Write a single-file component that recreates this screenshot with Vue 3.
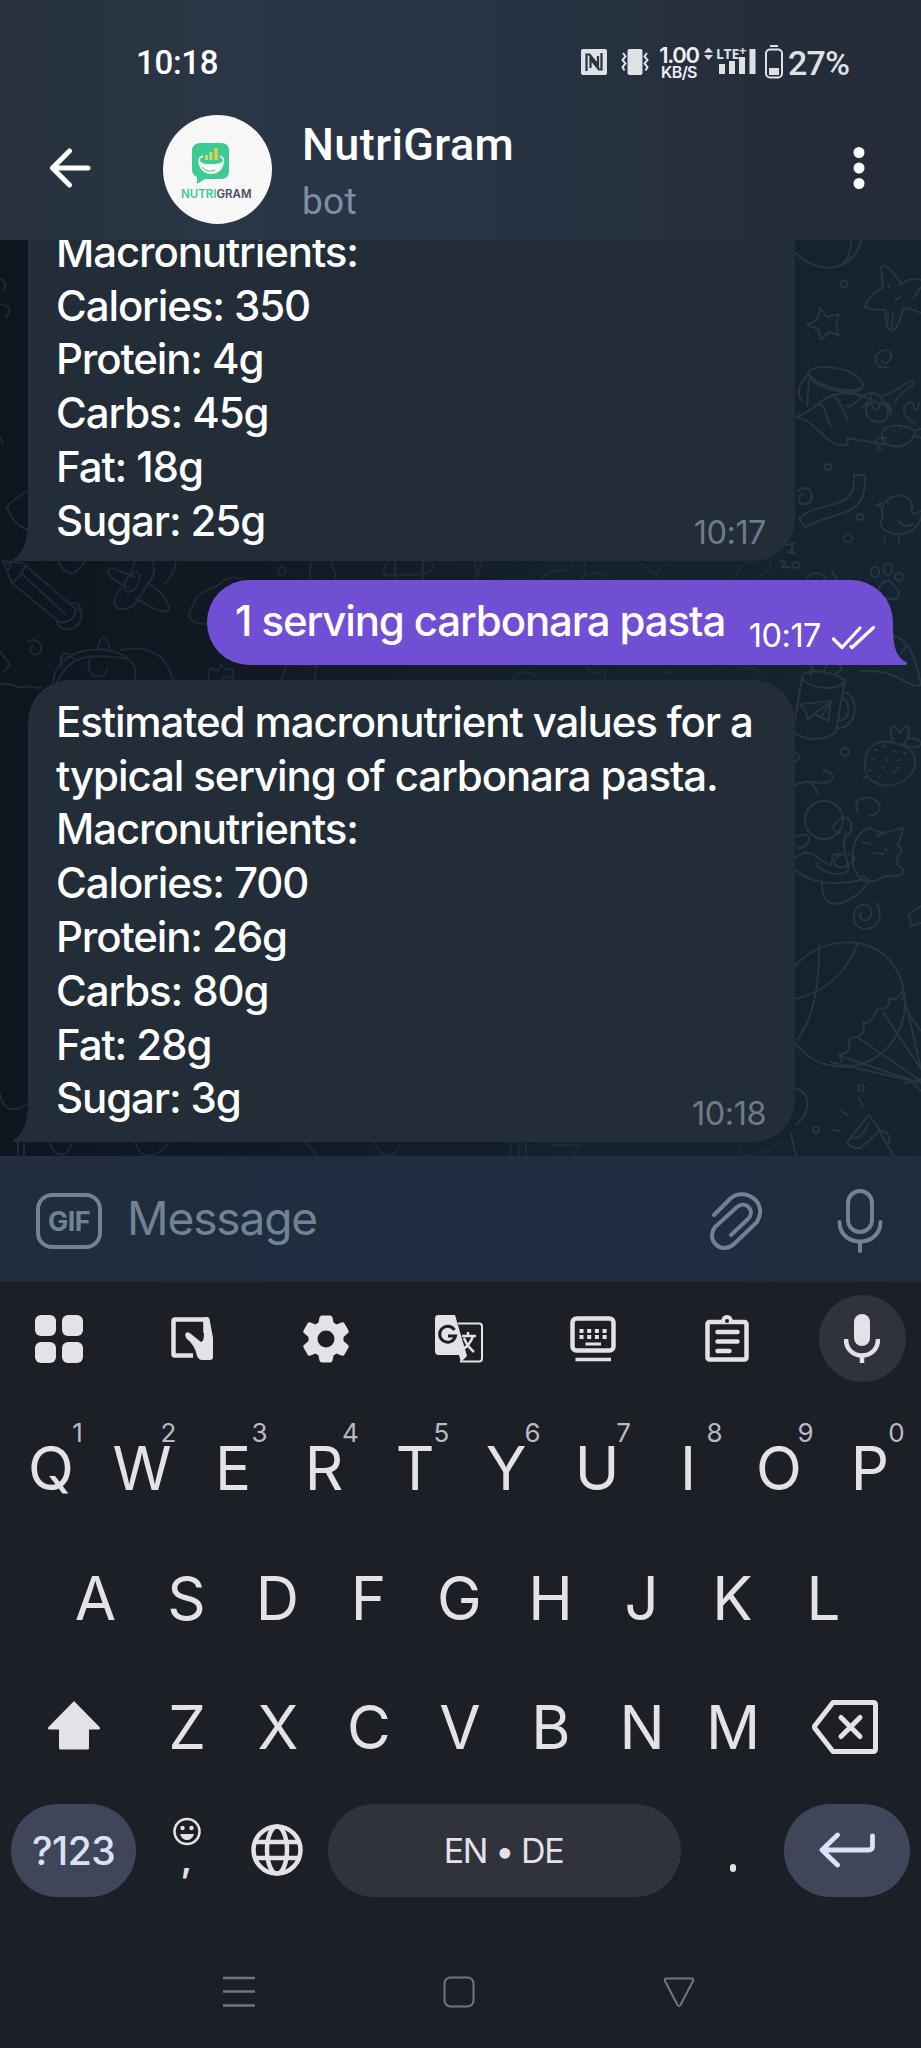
<script setup>
const first = ['Macronutrients:', 'Calories: 350', 'Protein: 4g', 'Carbs: 45g', 'Fat: 18g', 'Sugar: 25g']
const second = [
  'Estimated macronutrient values for a',
  'typical serving of carbonara pasta.',
  'Macronutrients:',
  'Calories: 700',
  'Protein: 26g',
  'Carbs: 80g',
  'Fat: 28g',
  'Sugar: 3g',
]
const row1 = [...'QWERTYUIOP'].map((k, i) => ({ k, n: (i + 1) % 10 }))
const row2 = [...'ASDFGHJKL']
const row3 = [...'ZXCVBNM']
</script>

<template>
  <div class="phone">
    <header class="top">
      <div class="status">
        <span class="clock">10:18</span>
        <div class="tray">
          <svg class="nfc" width="26" height="26" viewBox="0 0 26 26">
            <rect width="26" height="26" rx="2" fill="#dfe1e5" />
            <path d="M5.500 22V5.500H8.500L17 16V7 M20.500 4V20.500H18L9.500 10V19" fill="none" stroke="#283343" stroke-width="2.200" />
          </svg>
          <svg class="vib" width="28" height="26" viewBox="0 0 28 26">
            <rect x="6.500" width="15" height="26" rx="2" fill="#dfe1e5" />
            <path d="M2 4l2.500 3.500L1.500 11l3 3.500L1.500 18l2 3.500M26 4l-2.500 3.500 3 3.500-3 3.500 3 3.500-2 3.500" fill="none" stroke="#dfe1e5" stroke-width="2" />
          </svg>
          <div class="speed"><b>1.00</b><i>KB/S</i></div>
          <div class="signal">
            <svg width="52" height="28" viewBox="0 0 52 28">
              <g fill="#dfe1e5">
                <path d="M0 5.500L4.500 .5 9 5.500zM0 8L4.500 13 9 8z" />
                <rect x="15" y="17" width="6" height="10" />
                <rect x="25" y="14" width="6" height="13" />
                <rect x="35" y="10" width="6" height="17" />
                <rect x="45.500" y="2" width="6" height="25" />
              </g>
            </svg>
            <span class="lte">LTE<sup>+</sup></span>
          </div>
          <svg class="batt" width="18" height="34" viewBox="0 0 18 34">
            <path d="M5 1h8" stroke="#dfe1e5" stroke-width="2" />
            <rect x="1" y="4.500" width="16" height="28" rx="4" fill="none" stroke="#dfe1e5" stroke-width="2" />
            <rect x="4" y="23" width="10" height="7" fill="#dfe1e5" />
          </svg>
          <span class="pct">27%</span>
        </div>
      </div>
      <div class="bar">
        <svg class="back" width="42" height="42" viewBox="0 0 42 42">
          <path d="M39 21H4M20.500 4L3.500 21l17 17" fill="none" stroke="#fff" stroke-width="5" stroke-linecap="round" stroke-linejoin="round" />
        </svg>
        <div class="avatar">
          <svg width="38" height="41" viewBox="0 0 38 41">
            <path d="M9 0H29Q37 0 37 8V28Q37 36 29 36H13L5 41V34Q0 32 0 27V8Q0 0 9 0Z" fill="#3fca93" />
            <path d="M6 18C7 26 12 31 19 31s12-4 13-12c-3 3-7 3-12 3S10 22 6 18z" fill="#f4fbf7" />
            <path d="M11 13c-7 3-5 9 8 9s16-5 9-9" fill="none" stroke="#f4fbf7" stroke-width="1.500" />
            <path d="M10 24c3 4 8 5 13 3" fill="none" stroke="#3fca93" stroke-width="1" />
            <path d="M14.500 17v-5M18.800 17V9" stroke="#c8df65" stroke-width="3" />
            <path d="M24 17V5" stroke="#e9c941" stroke-width="3.500" />
          </svg>
          <div class="brand"><span>NUTRI</span>GRAM</div>
        </div>
        <div class="who">
          <div class="name">NutriGram</div>
          <div class="kind">bot</div>
        </div>
        <svg class="more" width="12" height="44" viewBox="0 0 12 44">
          <g fill="#fff"><circle cx="6" cy="6.500" r="5.500" /><circle cx="6" cy="22" r="5.500" /><circle cx="6" cy="37.500" r="5.500" /></g>
        </svg>
      </div>
    </header>

    <main class="chat">
      <svg class="paper" width="921" height="916" viewBox="0 240 921 916">
        <g fill="none" stroke="#263541" stroke-width="2" stroke-linecap="round" stroke-linejoin="round">
          <path d="M796 253c22 23 58 19 65-13M851 240q0 18-9 24" />
          <circle cx="844" cy="284" r="3.500" />
          <path d="M881 267c3-4 8 0 21 17 6-6 14-5 19-4M881 267c1 8 1 14 2 20-7 5-16 11-18 20 7 4 14 2 20 3 0 9 1 18 6 21 8-3 10-14 12-23 7 0 13 3 18 5M914 298l7-11M889 285v3M900 282v3M895 299q4 1 5-3M888 312l-1 15M893 313l-1 15" />
          <path d="M820 308l7 9 12-3-3 12 3 9-10-3-8 8-3-11-11-4 10-5zM888 367c-12 3-16-10-9-15s17 1 10 9c-4 5-8 1-6-2" />
          <path d="M808 373c4-12 53-5 55 12 1 10-47 5-55-12zM810 378c9 12 42 18 52 11M808 375c-10 9-12 20-6 25M809 380l-2 26M795 417c15-3 24-17 38-22 17-4 34 0 48 10M795 417c23 2 28 30 50 28 4-1 3-5 2-7M815 405c14-3 9 14 17 22M833 395q12 13 14 25M847 438l54 9M846 406c8 3 13-11 24-13M863 407q9-9 9-14M873 393c11 3 15 14 18 22M881 396c15-2 23-15 32-15 6 5-14 8-18 22M883 402q9 1 8 10" />
          <path d="M885 421c-20 5-24-15-13-19 0 12 7 10 8 0 7 4 11 8 5 19zM883 430c11-8 30-4 32 3-7 21-39 16-32-3zM886 438c-16-2-9 8-4 12M914 431l7-2M914 435l7 3M915 424c-21-14-7-25-1-21-1 10 4 9 5 0M878 448v3M894 430v1M901 428v1" />
          <circle cx="828" cy="467" r="3" /><circle cx="860" cy="517" r="3" /><circle cx="848" cy="538" r="4" />
          <path d="M798 491c10-10 20 8 9 13-11 2-10-10-3-10M854 475h11c3 44-27 34-60 52l-6-9c25-20 58-5 55-43z" />
          <path d="M883 518c-8-25 32-31 29-8-2 7 8 2 10 0 1 20-22 31-37 20-7-6-5-10-2-12zM882 503l-6 2 6 2M885 536l-1 6M899 535v7M898 521c5 6 11 6 15 3M888 502v1" />
          <ellipse cx="875" cy="572" rx="4" ry="5" /><ellipse cx="888" cy="569" rx="4" ry="6" /><ellipse cx="899" cy="577" rx="4" ry="4" />
          <path d="M878 590c4-10 12-12 16-4 8 5 5 15-3 13-5-2-15 2-13-9M787 545l7-2-3 7 4 4-8-2M780 561l6 1-4 5 8 0M806 582c3-13 18-11 21 0M832 570l5 12" /><circle cx="796" cy="565" r="3" />
          <path d="M890 635c21 2 27 30 31 50-13 5-22-17-61-14M907 645l-9 13" />
          <path d="M802 678l-9 53c11 12 38 9 43 0l9-52c-2 15-42 9-43-2 0-12 48-3 43 8M843 692c20 4 12 38-5 36M843 698c10 8 5 24-4 22M802 704l29-3-3 20-14-7-6 6-3-11-5-3zM814 714l17-13-10 16M810 675q5-5 0-9M825 674c-5-5 6-8 1-13M835 674q11-5 4-10" />
          <circle cx="845" cy="752" r="4" /><path d="M795 753a4 4 0 0 1 0 8" />
          <path d="M865 768c-1-26 15-31 39-22 15 6 15 27-1 35-16 9-36 4-38-13zM893 742c-5-17 0-20 7-9 7-13 12-5 7 5M904 744c6-13 22-1 15 2-7 3-11 1-15-2" /><path d="M875 750h2m6-3 2-1m9 5 2 1m8 1h2m-34 7 2-1m11-1 2 3m11-1h2m-31 10 2 1m12-4 2 1m12 0h2m-35 10 2-1m13 0 2-1m12-4 3-1m-22 11 2-1" />
          <path d="M795 786c8-8 26-1 33-4 10-3 3-12-5-11M812 783l6 11" /><circle cx="824" cy="820" r="19" />
          <path d="M796 836c22-6 12 14 1 12M795 858c17-13 19 1 35 7 6-4-4-13 13-11-13 3-10 18 3 12 8-3 13-11 3-12M840 833q-15-4 2-15M842 818c10-3 13 13 5 18M846 832c-7 19 5 31 2 38-7 10-36-1-30-8M858 812c-9-17 18-19 22-6 0 6-5 10-10 9M870 828c12 8 20 3 33 0-1 8-3 13-6 18 6 0 6 7 1 9l-1 9 7 6c-3 8-13 6-19 6-25 16-35-7-32-24q2-20 17-24M862 842l8 2M877 836l8-3M874 853l10 1M886 848v3M796 870c17 16 46 15 64 10M822 882c-2 34 30 23 46 1q2-5-6-7" />
          <path d="M877 903c13 28-24 35-23 13 0-15 20-15 17-1-3 10-15 4-10-2M921 906l-12 8 2 12 10-3" />
          <path d="M795 966c34-38 104-33 110 33 2 42-34 76-77 66q-20-5-33-22M819 945q1 65-22 95M858 943q-18 46-63 56M902 1000q4-5 0-9c-3 8-9 10-13 7 2 10-5 12-12 10-4 17-13 16-14 14 5 17-11 14-14 18 2 17-8 13-10 15l3 6M904 995l17 74M905 1008l16 23M883 1012l38 57M857 1037l64 44M840 1056l81 27M830 1062l91 21M905 1083l16-4M913 1083l8 8" />
          <circle cx="861" cy="1088" r="3" /><circle cx="816" cy="1130" r="3" /><path d="M859 1098l4 9M841 1110l6 5M833 1130l6 1M847 1142l22-27 11 15-19 18q-11 1-14-6zM851 1136c4 6 14-2 17-12M879 1131q12 0 10 12M880 1132l14 24M796 1088c16 6 14 25 1 36M791 1134l5 22" />
        </g>
        <g fill="none" stroke="#1e2933" stroke-width="2" stroke-linecap="round" stroke-linejoin="round">
          <path d="M3 561l20 2M3 561l9 22M25 565L71 605 80 611M12 583L58 621M20 572L65 614M25 565q-2 10-13 18M3 561l8 3-2 5M71 603c12-2 15 17 4 24-9 6-18 0-18-6M75 609c2 7-6 15-16 13" />
          <path d="M58 562c9 15 16 13 19 8 4-3 7-7 8-9M128 587C100 575 107 565 115 569L135 577M148 583c23 15 26 32 14 28-9-1-19-9-27-13M153 562q4 11-4 20C141 593 137 611 120 609c-10-3-5-14 0-20 7-10 11-17 15-27" />
          <ellipse cx="132" cy="582" rx="6" ry="11" transform="rotate(30 132 582)" /><path d="M176 562q-2 13-11 21M206 624c-27-1-15-16-8-28 8-7 15-5 25-15 7-5 12-4 18-2" />
          <path d="M28 642c7-7 19 5 10 12-8 2-11-6-5-8M0 651l10 14-6 6M0 684c14-2 15 5 24 3 7-2 10 1 17 1M53 682c2-20 18-32 46-33 35 4 38 18 36 32M62 668c-4-15 4-19 12-9M97 650c4-17 9-19 13 0M57 682c13-25 26-30 72-23M92 656c-6 6-4 21 6 20 6 1 8-2 9-6M121 650c28-6 47 5 52 32M208 680l2-12 8 3 3-6 6 5 6-1v9M223 679q2-5 8-1" />
          <circle cx="282" cy="571" r="4" /><path d="M312 562q-6 20 5 38M331 563q10 20 0 38M388 562c-8 12-5 15 7 13s25 3 35-4q6-5 1-9M395 579v-17M423 579v-17M475 562l2 17 5-17M542 579c11-17 27 0 29-15 12-18 20 8 10 15 19-13 31 0 23 0M640 563l14 12 14-13M650 570l10 9M735 579q3-14 15-17M770 562q5 6-15 17" />
          <path d="M281 680l6-16 30 2-3 14M514 680c5-11 18-9 22-3M586 667l8 7 12-4-2 10M663 674q6-5 10 2M718 671c9-15 20-8 24-2 15-5 15 4 22 10" />
          <path d="M0 279a7 7 0 0 1 4 11M0 304q15 2 6 13M3 443l-3-5M28 490Q0 510 8 508M8 508q3 15 20 22M0 1094q4 24 28 10M18 1142v14M24 1144v12M50 1142c4 17 18 16 21 3M135 1142c7 21 22 16 34 0M305 1142l12 14M375 1142c3 17 20 18 24 4M510 1156c0-25 10-20 9 0M526 1142v14M553 1145h27l-7 11M738 1147c8 16 16 5 21 6 15-1 15-13 29-11" />
        </g>
      </svg>

      <section class="bubble in one">
        <p v-for="t in first" :key="t">{{ t }}</p>
        <time>10:17</time>
        <svg class="tail left" width="24" height="42" viewBox="0 0 24 42"><path d="M16 0C16 22 12 34 0 41Q1 42 4 42H24V0z" fill="#222d38" /></svg>
      </section>
      <section class="bubble out">
        <p>1 serving carbonara pasta</p>
        <time>10:17</time>
        <svg class="ticks" width="46" height="25" viewBox="0 0 46 25"><path d="M2.500 14l8.500 8.500L29 3M20 21.500l1 1L42.500 2.500" fill="none" stroke="#fff" stroke-width="3.200" stroke-linecap="round" stroke-linejoin="round" /></svg>
        <svg class="tail right" width="24" height="42" viewBox="0 0 24 42"><path d="M10 0C10 22 12 33 23 39Q26 41 22 42H0V0z" fill="#714fd5" /></svg>
      </section>
      <section class="bubble in two">
        <p v-for="t in second" :key="t">{{ t }}</p>
        <time>10:18</time>
        <svg class="tail left" width="24" height="42" viewBox="0 0 24 42"><path d="M16 0C16 22 12 34 0 41Q1 42 4 42H24V0z" fill="#222d38" /></svg>
      </section>
    </main>

    <div class="compose">
      <div class="gif">GIF</div>
      <span class="hint">Message</span>
      <svg class="clip" width="54" height="60" viewBox="0 0 54 60">
        <path d="M4 24L20 8C34-5 59 11 47 31L24 53C12 64-5 50 5 36L27 16C36 9 46 20 38 28L21 44" fill="none" stroke="#708294" stroke-width="4" stroke-linecap="round" />
      </svg>
      <svg class="mic" width="46" height="66" viewBox="0 0 46 66">
        <g fill="none" stroke="#708294" stroke-width="4" stroke-linecap="round"><rect x="11" y="3" width="24" height="41" rx="12" /><path d="M2.500 34c0 26 41 26 41 0M23 54v9" /></g>
      </svg>
    </div>

    <div class="keyboard">
      <div class="tools">
        <div><svg width="48" height="48" viewBox="0 0 48 48"><g fill="#e3e2e8"><rect width="21" height="21" rx="6" /><rect x="27" width="21" height="21" rx="6" /><rect y="27" width="21" height="21" rx="6" /><rect x="27" y="27" width="21" height="21" rx="6" /></g></svg></div>
        <div><svg width="42" height="43" viewBox="0 0 42 43"><path d="M22 38.500H3.500Q2.500 38.500 2.500 37V4Q2.500 2.500 4 2.500H34.500V16" fill="none" stroke="#e3e2e8" stroke-width="4.500" /><path d="M33 0h3q2 0 2.500 2L42 21v19q0 3-3 3H31q-3 0-5-4-2-11-10-17-3-4-1-6 2-2 5 1l10 8q3-1 3-8z" fill="#e3e2e8" /></svg></div>
        <div><svg width="48" height="48" viewBox="0 0 48 48"><path fill="#e3e2e8" fill-rule="evenodd" d="M20 .5h8q2 0 2.500 2l1 5 3 2 5-2q2-1 3 1l4 7q1 2-1 3l-4 3.500v4l4 3.500q2 1 1 3l-4 7q-1 2-3 1l-5-2-3 2-1 5q-.5 2-2.500 2h-8q-2 0-2.500-2l-1-5-3-2-5 2q-2 1-3-1l-4-7q-1-2 1-3l4-3.500v-4l-4-3.500q-2-1-1-3l4-7q1-2 3-1l5 2 3-2 1-5q.5-2 2.500-2zM24 15.500a8.500 8.500 0 1 0 0 17 8.500 8.500 0 0 0 0-17z" /></svg></div>
        <div><svg width="48" height="48" viewBox="0 0 48 48"><path d="M23 8.500h21q3 0 3 3v32q0 3-3 3H25" fill="none" stroke="#e3e2e8" stroke-width="2" /><path d="M3 0h17l12 41-6 6-2-7H4q-4 0-4-4V4q0-4 3-4z" fill="#e3e2e8" /><path d="M19.500 15a8 8 0 1 0 1 6H13" fill="none" stroke="#1d1f27" stroke-width="3" /><path d="M27 21h14M33 17v4M38 21q-3 9-11 14M29 23q3 8 10 14" fill="none" stroke="#e3e2e8" stroke-width="2.400" /></svg></div>
        <div><svg width="46" height="46" viewBox="0 0 46 46"><rect x="2.500" y="2.500" width="41" height="32" rx="4" fill="none" stroke="#e3e2e8" stroke-width="4.500" /><path d="M5.500 43.500h35.500" stroke="#e3e2e8" stroke-width="3.500" /><path d="M9.500 15h28M9.500 21h28" stroke="#e3e2e8" stroke-width="4" stroke-dasharray="4 3.700" /><path d="M15.500 28H31" stroke="#e3e2e8" stroke-width="3" /></svg></div>
        <div><svg width="44" height="48" viewBox="0 0 44 48"><rect x="2.500" y="7" width="39" height="37.500" rx="2" fill="none" stroke="#e3e2e8" stroke-width="4.500" /><path d="M16 6q1-6 6-6t6 6v3H16z" fill="#e3e2e8" /><circle cx="22" cy="6" r="2" fill="#1d1f27" /><path d="M12.500 17h20M12.500 26.500h20M12.500 36h12" stroke="#e3e2e8" stroke-width="4.500" stroke-linecap="round" /></svg></div>
        <div><span class="round"><svg width="36" height="50" viewBox="0 0 36 50"><rect x="10" y="0" width="16" height="32" rx="8" fill="#e3e2e8" /><path d="M2 25c0 22 32 22 32 0M18 41v8" fill="none" stroke="#e3e2e8" stroke-width="4.500" /></svg></span></div>
      </div>
      <div class="row r1"><div v-for="c in row1" :key="c.k" class="key">{{ c.k }}<small>{{ c.n }}</small></div></div>
      <div class="row r2"><div v-for="c in row2" :key="c" class="key">{{ c }}</div></div>
      <div class="row r3">
        <div class="side"><svg width="54" height="50" viewBox="0 0 54 50"><path d="M27 1L52.500 27q1.500 2-1 2.500H42V48q0 1.500-1.500 1.500h-27Q12 49.500 12 48V29.500H2.500Q0 29 1.500 27z" fill="#e3e2e8" /></svg></div>
        <div v-for="c in row3" :key="c" class="key">{{ c }}</div>
        <div class="side del"><svg width="66" height="54" viewBox="0 0 66 54"><path d="M21 2.500H61Q63.500 2.500 63.500 5V49Q63.500 51.500 61 51.500H21L3 28.500Q2 27 3 25.500z" fill="none" stroke="#e3e2e8" stroke-width="5" stroke-linejoin="round" /><path d="M29 17.500l19 19M48 17.500l-19 19" stroke="#e3e2e8" stroke-width="5" stroke-linecap="round" /></svg></div>
      </div>
      <div class="row r4">
        <div class="pill sym">?123</div>
        <div class="emoji">
          <svg width="28" height="29" viewBox="0 0 28 29"><circle cx="14" cy="14.500" r="12.500" fill="none" stroke="#e3e2e8" stroke-width="2.600" /><circle cx="9.500" cy="11" r="2.200" fill="#e3e2e8" /><circle cx="18.500" cy="11" r="2.200" fill="#e3e2e8" /><path d="M7 17h14q-2 6-7 6t-7-6z" fill="#e3e2e8" /></svg>
          <span>,</span>
        </div>
        <div class="globe"><svg width="52" height="52" viewBox="0 0 52 52"><g fill="none" stroke="#e3e2e8" stroke-width="4.500"><circle cx="26" cy="26" r="23.500" /><ellipse cx="26" cy="26" rx="10" ry="23.500" /><path d="M4 18h44M4 34h44" /></g></svg></div>
        <div class="pill space">EN • DE</div>
        <div class="dot"><i></i></div>
        <div class="pill enter"><svg width="58" height="36" viewBox="0 0 58 36"><path d="M54.500 4V14Q54.500 18 50.500 18H4M19.500 3L4 18l15.500 15" fill="none" stroke="#dce1f9" stroke-width="4.800" stroke-linecap="round" stroke-linejoin="round" /></svg></div>
      </div>
      <nav>
        <svg width="32" height="32" viewBox="0 0 32 32"><path d="M0 2h32M0 15.500h32M0 29.500h32" stroke="#74747f" stroke-width="2.500" /></svg>
        <svg width="32" height="32" viewBox="0 0 32 32"><rect x="1.500" y="1.500" width="29" height="29" rx="6" fill="none" stroke="#74747f" stroke-width="2" /></svg>
        <svg width="32" height="32" viewBox="0 0 32 32"><path d="M3.500 2.500H28.500Q31 2.500 30 5L17.500 29Q16 31 14.500 29L2 5Q1 2.500 3.500 2.500z" fill="none" stroke="#74747f" stroke-width="2" /></svg>
      </nav>
    </div>
  </div>
</template>

<style>
html, body { background: #1d1f27; }
</style>

<style scoped>
.phone { width: 921px; height: 2048px; overflow: hidden; font-family: Inter, "Liberation Sans", sans-serif; color: #fff; background: #1d1f27; }
.phone * { box-sizing: border-box; }
svg { display: block; flex: none; }
.top { height: 240px; background: linear-gradient(90deg, #27313d 0, #2a3645 22%, #283445 50%, #242d3a 85%, #242c38 100%); font-family: Roboto, sans-serif; }
.status { height: 115px; padding: 44px 0 0 136px; display: flex; }
.clock { width: 445px; font-size: 33px; line-height: 38px; font-weight: 500; letter-spacing: -.3px; }
.tray { display: flex; height: 38px; color: #dfe1e5; }
.nfc { margin-top: 5px; }
.vib { margin: 5px 9px 0 14px; }
.speed { width: 42px; margin: 0 4px 0 0; font-family: Inter, sans-serif; color: #eef0f3; text-align: center; white-space: nowrap; }
.speed b { display: block; font-size: 22px; line-height: 22px; height: 20px; font-weight: 600; letter-spacing: -1.300px; }
.speed i { display: block; font-style: normal; font-weight: 600; font-size: 16px; line-height: 17px; height: 17px; letter-spacing: -.6px; }
.signal { position: relative; width: 52px; margin: 3px 9px 0 0; }
.lte { position: absolute; left: 12px; top: 0; font: 700 14px/14px "Open Sans", sans-serif; white-space: nowrap; letter-spacing: -.3px; }
.lte sup { font-size: 13px; line-height: 0; vertical-align: 4px; }
.batt { margin: 1px 5px 0 0; }
.pct { font-size: 34px; line-height: 38px; letter-spacing: -.8px; font-weight: 500; }
.bar { display: flex; height: 125px; }
.back { margin: 32px 0 0 49px; }
.avatar { flex: none; margin-left: 72px; width: 109px; height: 109px; border-radius: 50%; background: #f7f7f7; padding: 28px 0 0 29px; }
.brand { margin: 3px 0 0 -11px; font: 600 11.500px/14px Inter, sans-serif; color: #46505b; white-space: nowrap; }
.brand span { color: #3fca93; }
.who { flex: none; margin-left: 30px; width: 551px; }
.name { font-size: 45px; line-height: 52px; font-weight: 500; margin-top: 4px; letter-spacing: .4px; }
.kind { font-size: 37px; line-height: 44px; margin-top: 9px; color: #7d8fa3; letter-spacing: .3px; }
.more { margin-top: 31px; }

.chat { position: relative; height: 916px; overflow: hidden; background: linear-gradient(90deg, #0e151e 0, #101822 20%, #14202c 60%, #162330 100%); }
.paper { position: absolute; inset: 0; }
.bubble { position: relative; }
.bubble p { margin: 0; font-size: 42px; line-height: 53.800px; font-weight: 500; white-space: nowrap; letter-spacing: -1.120px; }
.bubble time { position: absolute; right: 29px; bottom: 9.500px; font-size: 32.500px; line-height: 38px; color: #6d7a87; letter-spacing: -.5px; }
.in { margin-left: 28px; width: 767px; background: #222d38; padding: 14.800px 0 0 28px; }
.one { margin-top: -30px; height: 351px; border-radius: 0 0 42px 0; }
.two { margin-top: 15px; height: 462px; border-radius: 42px 42px 42px 0; }
.out { margin: 18.500px 0 0 207px; width: 686px; height: 85.500px; border-radius: 42px 42px 0 42px; background: #714fd5; padding: 14.500px 0 0 28px; }
.out time { color: #fff; right: 72px; bottom: 10.500px; }
.ticks { position: absolute; left: 624px; top: 45px; }
.tail { position: absolute; bottom: 0; }
.left { left: -16px; }
.right { right: -14px; }

.compose { height: 126px; background: linear-gradient(90deg, #202d3c, #1e2d3f 30%, #1e2d3f 80%, #202c3b); display: flex; padding-left: 36px; color: #708294; }
.gif { margin-top: 37px; width: 66px; height: 56px; border: 4px solid #708294; border-radius: 16px; font: 700 27px/49px Inter, sans-serif; text-align: center; letter-spacing: -.6px; }
.hint { margin: 34px 0 0 25px; width: 583px; font-size: 46px; line-height: 56px; letter-spacing: -1.100px; }
.clip { margin-top: 35px; }
.mic { margin: 32px 0 0 73px; }

.tools { height: 113px; display: grid; grid-template-columns: 125px 133px 135px 132px 136px 132px 128px; }
.tools div { display: flex; align-items: center; justify-content: center; }
.tools div:first-child { padding-right: 7px; }
.round { width: 87px; height: 87px; border-radius: 50%; background: #31333c; display: flex; align-items: center; justify-content: center; margin-left: 10px; }
.row { display: flex; height: 129.500px; padding: 0 5.500px; color: #e3e2e8; }
.key { position: relative; width: 91px; flex: none; text-align: center; font-size: 60px; line-height: 76px; padding-top: 35px; }
.key small { position: absolute; left: 62px; width: 20px; top: 22px; font-size: 26px; line-height: 32px; text-align: center; color: #b9bac6; }
.r2 { padding-left: 50px; }
.side { width: 136px; display: flex; justify-content: center; padding-top: 46px; }
.del { padding-right: 4px; }
.r4 { height: 93px; margin-top: 20px; padding: 0 11px; align-items: center; }
.pill { height: 93px; border-radius: 47px; display: flex; align-items: center; justify-content: center; }
.sym { width: 125px; background: #40465a; color: #dce1f9; font-size: 39px; font-weight: 500; letter-spacing: -.5px; }
.emoji { width: 101px; height: 93px; padding-top: 13px; display: flex; flex-direction: column; align-items: center; }
.emoji span { font-size: 36px; font-weight: 600; line-height: 36px; margin-top: -5px; }
.globe { width: 91px; display: flex; justify-content: center; padding-right: 11px; }
.space { width: 353px; background: #31333c; font-size: 34px; letter-spacing: -1.400px; padding-right: 2px; }
.dot { width: 103px; display: flex; justify-content: center; padding-top: 36px; }
.dot i { width: 6px; height: 8px; border-radius: 4px; background: #e3e2e8; }
.enter { width: 126px; background: #40465a; }
nav { display: flex; gap: 188px; padding: 79px 0 0 222.500px; }
</style>
